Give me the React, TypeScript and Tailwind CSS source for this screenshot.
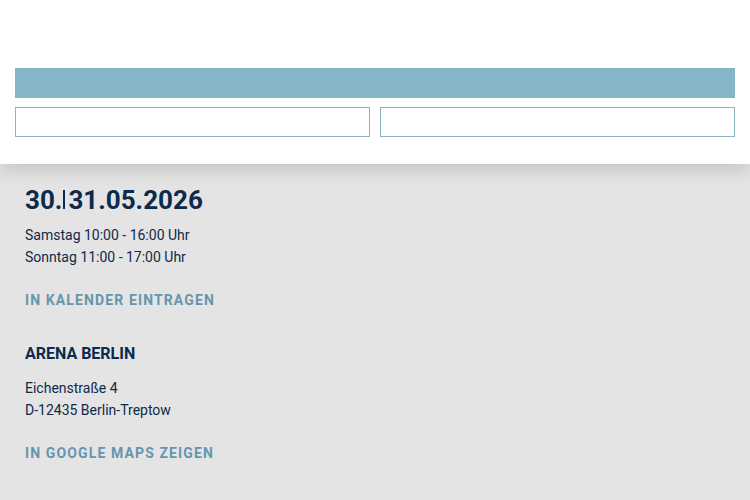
export default function App() {
  return (
    <div className="min-h-[500px] bg-[#e4e4e4] font-['Roboto',sans-serif] text-[#0c2a4b]">
      <header className="relative z-10 h-[164px] bg-white px-[15px] pt-[68px] shadow-[0_6px_18px_rgba(0,0,0,0.14)]">
        <div className="h-[30px] bg-[#84b5c9]" />
        <div className="mt-[9px] grid grid-cols-2 gap-[10px]">
          <div className="h-[30px] border border-[#8ab6c4] bg-white" />
          <div className="h-[30px] border border-[#8ab6c4] bg-white" />
        </div>
      </header>

      <main className="px-[25px] pt-[21px]">
        <h2 className="text-[26px] font-bold leading-[30px]">
          30.<span className="ml-[1px] mr-[3px] inline-block h-[19px] w-[2px] bg-[#0c2a4b] align-baseline" />31.05.2026
        </h2>
        <p className="mt-[9px] text-[14px] leading-[22px]">
          Samstag 10:00 - 16:00 Uhr
          <br />
          Sonntag 11:00 - 17:00 Uhr
        </p>
        <a className="mt-[22px] block text-[14px] font-bold uppercase leading-[20px] tracking-[0.08em] text-[#6596ad]">
          In Kalender eintragen
        </a>

        <h3 className="mt-[32px] text-[16px] font-bold leading-[24px]">ARENA BERLIN</h3>
        <p className="mt-[11px] text-[14px] leading-[22px]">
          Eichenstraße 4
          <br />
          D-12435 Berlin-Treptow
        </p>
        <a className="mt-[22px] block text-[14px] font-bold uppercase leading-[20px] tracking-[0.08em] text-[#6596ad]">
          In Google Maps zeigen
        </a>
      </main>
    </div>
  )
}
